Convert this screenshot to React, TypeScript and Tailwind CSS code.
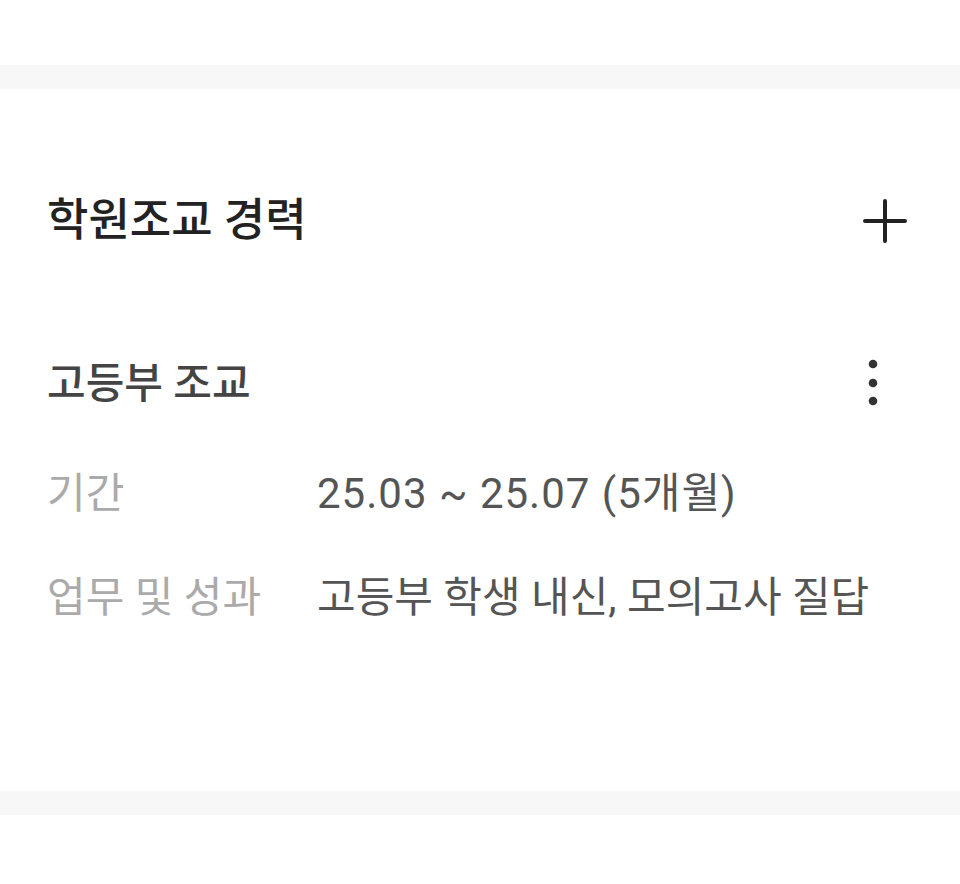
const FONT = "font-['Roboto','Noto_Sans_CJK_KR',sans-serif]";

const DETAILS = [
  { label: '기간', value: '25.03 ~ 25.07 (5개월)', tracking: 'tracking-[1px]' },
  { label: '업무 및 성과', value: '고등부 학생 내신, 모의고사 질답', tracking: '' },
];

function PlusIcon() {
  return (
    <svg width="48" height="48" viewBox="0 0 48 48" stroke="#222" strokeWidth="4" strokeLinecap="round">
      <path d="M24 4v40M4 24h40" />
    </svg>
  );
}

function MoreIcon() {
  return (
    <svg width="48" height="48" viewBox="0 0 48 48" fill="#333">
      <circle cx="24" cy="5" r="4.3" />
      <circle cx="24" cy="24" r="4.3" />
      <circle cx="24" cy="42" r="4.3" />
    </svg>
  );
}

export default function App() {
  return (
    <div className={`min-h-[884px] bg-white ${FONT}`}>
      <div className="h-[65px]" />
      <div className="h-[24px] bg-[#f7f7f7]" />

      <section className="px-[47px] pt-[108px] pb-[166px]">
        <header className="flex h-[48px] items-center justify-between">
          <h2 className="text-[45px] font-medium text-[#222]">학원조교 경력</h2>
          <button type="button" className="mr-[4px] flex h-[48px] w-[48px] items-center justify-center">
            <PlusIcon />
          </button>
        </header>

        <div className="mt-[114px] flex h-[48px] items-center justify-between">
          <h3 className="text-[42px] font-medium text-[#444]">고등부 조교</h3>
          <button type="button" className="mr-[16px] flex h-[48px] w-[48px] items-center justify-center">
            <MoreIcon />
          </button>
        </div>

        <dl className="mt-[58px] flex flex-col gap-[48px]">
          {DETAILS.map((d) => (
            <div key={d.label} className="flex h-[56px] items-center text-[42px]">
              <dt className="w-[270px] shrink-0 text-[#aaa]">{d.label}</dt>
              <dd className={`text-[#555] ${d.tracking}`}>{d.value}</dd>
            </div>
          ))}
        </dl>
      </section>

      <div className="h-[24px] bg-[#f7f7f7]" />
    </div>
  );
}
